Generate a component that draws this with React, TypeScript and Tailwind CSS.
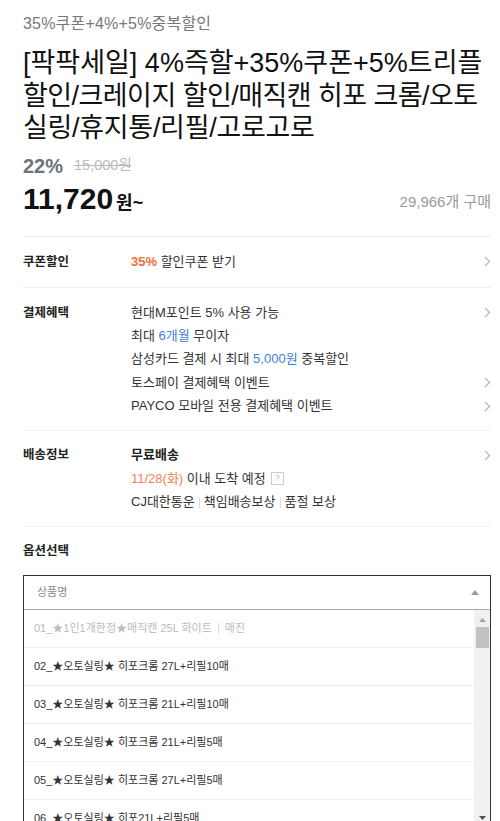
import React from "react";

const font = { fontFamily: '"Liberation Sans", "Noto Sans CJK KR", sans-serif' };

const Chevron = () => (
    <svg width="7" height="11" viewBox="0 0 7 11" className="shrink-0">
        <path d="M1 1l4.5 4.5L1 10" fill="none" stroke="#b5b5b5" strokeWidth="1.2" />
    </svg>
);

const options = [
    "02_★오토실링★ 히포크롬 27L+리필10매",
    "03_★오토실링★ 히포크롬 21L+리필10매",
    "04_★오토실링★ 히포크롬 21L+리필5매",
    "05_★오토실링★ 히포크롬 27L+리필5매",
    "06_★오토실링★ 히포21L+리필5매",
];

const benefits = [
    { node: <>현대M포인트 5% 사용 가능</>, arrow: true },
    {
        node: (
            <>
                최대 <span className="text-[#3f7fd6]">6개월</span> 무이자
            </>
        ),
        arrow: false,
    },
    {
        node: (
            <>
                삼성카드 결제 시 최대 <span className="text-[#3f7fd6]">5,000원</span> 중복할인
            </>
        ),
        arrow: false,
    },
    { node: <>토스페이 결제혜택 이벤트</>, arrow: true },
    { node: <>PAYCO 모바일 전용 결제혜택 이벤트</>, arrow: true },
];

const App = () => {
    return (
        <div className="w-[500px] h-[821px] overflow-hidden bg-white pl-[23px] pr-[9px] pt-[15px]" style={font}>
            {/* header */}
            <p className="text-[16px] leading-[18px] text-[#777] tracking-[0.2px]">35%쿠폰+4%+5%중복할인</p>
            <h1 className="mt-[14px] text-[27px] leading-[32.5px] text-[#111] whitespace-nowrap">
                <span className="block">[팍팍세일] 4%즉할+35%쿠폰+5%트리플</span>
                <span className="block tracking-[-0.55px]">할인/크레이지 할인/매직캔 히포 크롬/오토</span>
                <span className="block tracking-[-0.3px]">실링/휴지통/리필/고로고로</span>
            </h1>
            {/* price */}
            <div className="mt-[10px] flex items-center gap-[11px] h-[22px]">
                <span className="text-[20px] font-bold text-[#6e727b]">22%</span>
                <span className="text-[14.5px] text-[#bbb] line-through">15,000원</span>
            </div>
            <div className="mt-[8px] flex items-end justify-between h-[36px]">
                <div className="flex items-baseline">
                    <span className="text-[30px] font-bold text-[#111]">11,720</span>
                    <span className="text-[18px] font-bold text-[#111] ml-[3px]">원~</span>
                </div>
                <span className="text-[15px] text-[#999] mb-[7px]">29,966개 구매</span>
            </div>
            <div className="mt-[15px] border-t border-[#eee]" />

            {/* coupon */}
            <div className="flex pt-[15px] pb-[15px] border-b border-[#eee]">
                <span className="w-[108px] text-[12.5px] leading-[20px] font-bold text-[#222]">쿠폰할인</span>
                <div className="flex-1 flex items-center justify-between text-[13px] leading-[20px] text-[#333]">
                    <span>
                        <span className="font-bold text-[#f46e3c]">35%</span> 할인쿠폰 받기
                    </span>
                    <Chevron />
                </div>
            </div>

            {/* payment */}
            <div className="flex pt-[15px] pb-[14px] border-b border-[#eee]">
                <span className="w-[108px] text-[12.5px] leading-[20px] font-bold text-[#222]">결제혜택</span>
                <div className="flex-1 flex flex-col gap-[3.4px]">
                    {benefits.map((b, i) => (
                        <div key={i} className="flex items-center justify-between text-[13px] leading-[20px] text-[#333]">
                            <span>{b.node}</span>
                            {b.arrow && <Chevron />}
                        </div>
                    ))}
                </div>
            </div>

            {/* delivery */}
            <div className="flex pt-[14px] pb-[14px] border-b border-[#eee]">
                <span className="w-[108px] text-[12.5px] leading-[20px] font-bold text-[#222]">배송정보</span>
                <div className="flex-1 flex flex-col gap-[3.5px] text-[13px] leading-[20px] text-[#333]">
                    <div className="flex items-center justify-between">
                        <span className="font-bold text-[#222]">무료배송</span>
                        <Chevron />
                    </div>
                    <div className="flex items-center gap-[5px]">
                        <span>
                            <span className="text-[#f5825a]">11/28(화)</span> 이내 도착 예정
                        </span>
                        <span className="w-[13px] h-[13px] border border-[#ccc] text-[9px] leading-[11px] text-[#bbb] flex items-center justify-center">
                            ?
                        </span>
                    </div>
                    <div className="flex items-center gap-[4px]">
                        <span>CJ대한통운</span>
                        <span className="w-px h-[11px] bg-[#ddd]" />
                        <span>책임배송보상</span>
                        <span className="w-px h-[11px] bg-[#ddd]" />
                        <span>품절 보상</span>
                    </div>
                </div>
            </div>

            {/* options */}
            <p className="pt-[14px] text-[12.5px] leading-[20px] font-bold text-[#222]">옵션선택</p>
            <div className="mt-[14px] border border-[#333] border-b-0">
                <div className="h-[34px] flex items-center justify-between pl-[13px] pr-[11px] border-b border-[#aaa]">
                    <span className="text-[11px] text-[#888]">상품명</span>
                    <svg width="8" height="5" viewBox="0 0 8 5">
                        <path d="M0 5L4 0l4 5z" fill="#999" />
                    </svg>
                </div>
                <div className="flex h-[212px]">
                    <div className="flex-1 overflow-hidden">
                        <div className="h-[38px] flex items-center gap-[6px] pl-[10px] border-b border-[#eee] text-[11px] text-[#bbb]">
                            <span>01_★1인1개한정★매직캔 25L 화이트</span>
                            <span className="w-px h-[11px] bg-[#ddd]" />
                            <span>매진</span>
                        </div>
                        {options.map((o, i) => (
                            <div
                                key={i}
                                className="h-[38px] flex items-center pl-[10px] border-b border-[#eee] text-[11px] text-[#333]"
                            >
                                {o}
                            </div>
                        ))}
                    </div>
                    <div className="w-[16px] bg-[#f1f1f1] flex flex-col items-center justify-between">
                        <div className="flex flex-col items-center w-full">
                            <svg width="7" height="4" viewBox="0 0 7 4" className="mt-[8px]">
                                <path d="M0 4L3.5 0 7 4z" fill="#a3a3a3" />
                            </svg>
                            <div className="mt-[5px] w-[13px] h-[21px] bg-[#c1c1c1]" />
                        </div>
                        <svg width="7" height="4" viewBox="0 0 7 4" className="mb-[2px]">
                            <path d="M0 0h7L3.5 4z" fill="#505050" />
                        </svg>
                    </div>
                </div>
            </div>
        </div>
    );
};

export default App;
